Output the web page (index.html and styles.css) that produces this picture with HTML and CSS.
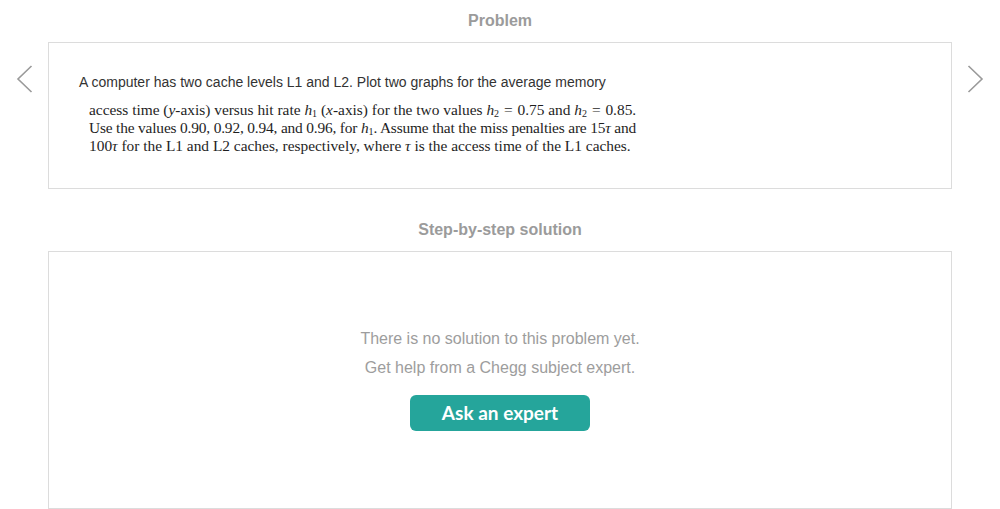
FILE: index.html
```html
<!DOCTYPE html>
<html lang="en">
<head>
<meta charset="utf-8">
<title>Problem</title>
<link rel="stylesheet" href="styles.css">
</head>
<body>
<main class="page">
  <section class="section">
    <h2 class="section-title">Problem</h2>
    <div class="row">
      <button class="nav nav-prev" aria-label="Previous">
        <svg width="17" height="28" viewBox="0 0 17 28"><path d="M15.5 1 L2 14 L15.5 27" fill="none" stroke="#9a9a9a" stroke-width="1.6"/></svg>
      </button>
      <div class="card problem-card">
        <p class="lead">A computer has two cache levels L1 and L2. Plot two graphs for the average memory</p>
        <div class="book">
          <span class="line">access time (<i>y</i>-axis) versus hit rate <i>h</i><sub>1</sub> (<i>x</i>-axis) for the two values <i>h</i><sub>2</sub> <span class="eq">=</span> 0.75 and <i>h</i><sub>2</sub> <span class="eq">=</span> 0.85.</span>
          <span class="line tight">Use the values 0.90, 0.92, 0.94, and 0.96, for <i>h</i><sub>1</sub>. Assume that the miss penalties are 15<i>τ</i> and</span>
          <span class="line">100<i>τ</i> for the L1 and L2 caches, respectively, where <i>τ</i> is the access time of the L1 caches.</span>
        </div>
      </div>
      <button class="nav nav-next" aria-label="Next">
        <svg width="17" height="28" viewBox="0 0 17 28"><path d="M1.5 1 L15 14 L1.5 27" fill="none" stroke="#9a9a9a" stroke-width="1.6"/></svg>
      </button>
    </div>
  </section>
  <section class="section solution">
    <h2 class="section-title">Step-by-step solution</h2>
    <div class="row">
      <div class="gutter"></div>
      <div class="card solution-card">
        <p class="empty">There is no solution to this problem yet.</p>
        <p class="empty">Get help from a Chegg subject expert.</p>
        <button class="ask">Ask an expert</button>
      </div>
      <div class="gutter"></div>
    </div>
  </section>
</main>
</body>
</html>
```
FILE: styles.css
```css
html, body {
  margin: 0;
  padding: 0;
  background: #ffffff;
}
body {
  font-family: "Liberation Sans", Arial, sans-serif;
  color: #333;
}
.page {
  display: flex;
  flex-direction: column;
}
.section {
  display: flex;
  flex-direction: column;
}
.section-title {
  margin: 12px 0 12px;
  font-size: 16px;
  line-height: 18px;
  font-weight: 700;
  color: #9b9b9b;
  text-align: center;
}
.solution .section-title {
  margin-top: 32px;
}
.row {
  display: grid;
  grid-template-columns: 48px 1fr 48px;
  align-items: start;
}
.nav {
  display: flex;
  align-items: center;
  justify-content: center;
  margin: 22px 0 0;
  padding: 0;
  border: 0;
  background: none;
  height: 30px;
}
.nav-prev { justify-content: flex-start; padding-left: 16px; }
.nav-next { justify-content: flex-end; padding-right: 16px; }
.card {
  border: 1px solid #dcdcdc;
  background: #fff;
}
.problem-card {
  padding: 30px 30px 33px;
}
.lead {
  margin: 0;
  font-size: 14px;
  line-height: 18px;
  color: #333;
}
.book {
  margin: 10px 0 0 10px;
  font-family: "Liberation Serif", "Times New Roman", serif;
  font-size: 15.4px;
  line-height: 18px;
  color: #1e1e1e;
}
.book .line {
  display: block;
  white-space: nowrap;
}
.book .tight {
  letter-spacing: -0.17px;
}
.book i {
  font-style: italic;
}
.book sub {
  font-size: 10px;
  line-height: 0;
  vertical-align: -2px;
}
.book .eq {
  padding: 0 1px;
}
.solution-card {
  display: flex;
  flex-direction: column;
  align-items: center;
  padding: 72px 0 77px;
}
.empty {
  margin: 0;
  font-size: 16px;
  line-height: 29px;
  color: #9d9d9d;
}
.ask {
  margin-top: 13px;
  width: 180px;
  height: 36px;
  border: 0;
  border-radius: 6px;
  background: #25a59b;
  color: #fff;
  font-family: Lato, "Liberation Sans", sans-serif;
  font-weight: 700;
  font-size: 19px;
  line-height: 36px;
  padding: 0;
}
```
